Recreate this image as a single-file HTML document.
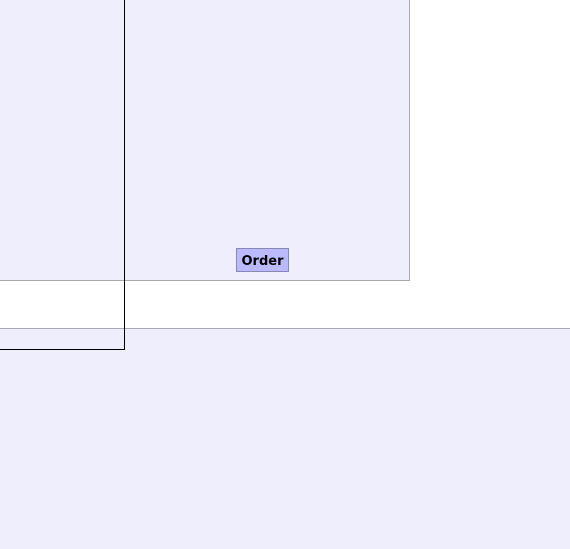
<!DOCTYPE html>
<html><head><style>
html,body{margin:0;padding:0;width:570px;height:549px;overflow:hidden;background:#fff;position:relative}
.a{position:absolute;left:0;top:0;width:409px;height:280px;background:#eeeefc;border-right:1px solid #a8a8b8;border-bottom:1px solid #a8a8b8}
.b{position:absolute;left:0;top:328px;width:570px;height:221px;background:#eeeefc;border-top:1px solid #a8a8b8}
.btn{position:absolute;left:236px;top:248px;width:51px;height:20px;padding-top:2px;background:#babafc;border:1px solid #8888b8;font:bold 13px "DejaVu Sans",sans-serif;color:#000;text-align:center;line-height:22px}
.l{position:absolute;left:0;top:0;width:124px;height:349px;border-right:1px solid #000;border-bottom:1px solid #000}
</style></head><body>
<div class="a"></div>
<div class="b"></div>
<div class="btn">Order</div>
<div class="l"></div>
</body></html>
